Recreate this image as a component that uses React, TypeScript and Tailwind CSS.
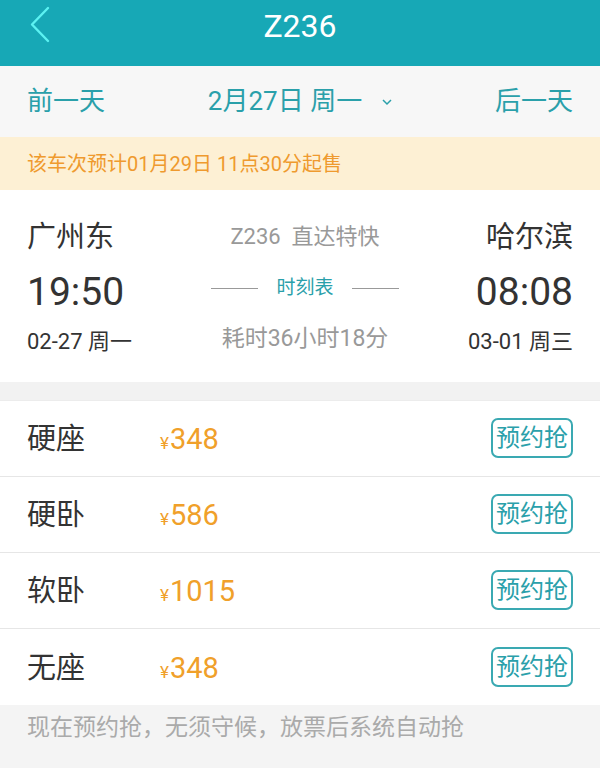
import React from "react";

const font = { fontFamily: 'Roboto, "Noto Sans CJK SC", sans-serif' };

const seats = [
  { name: "硬座", price: "348" },
  { name: "硬卧", price: "586" },
  { name: "软卧", price: "1015" },
  { name: "无座", price: "348" },
];

export default function App() {
  return (
    <div className="w-[600px] h-[768px] bg-[#f4f4f4] overflow-hidden flex flex-col" style={font}>
      {/* Header */}
      <div className="h-[66px] bg-[#17a8b6] flex items-center relative shrink-0">
        <svg className="absolute left-[28px] top-[6px]" width="24" height="38" viewBox="0 0 24 38">
          <path d="M20 2 L4 18.5 L20 35" fill="none" stroke="#5cf2f2" strokeWidth="2.4" strokeLinecap="round" strokeLinejoin="round" />
        </svg>
        <div className="flex-1 text-center text-white text-[32px] leading-none -mt-[14px]">Z236</div>
      </div>

      {/* Date bar */}
      <div className="h-[71px] bg-[#f7f7f7] flex items-center justify-between px-[27px] text-[#2aa0aa] text-[26px] shrink-0">
        <span>前一天</span>
        <span className="flex items-center">
          2月27日 周一
          <svg className="ml-[20px] mt-[2px]" width="10" height="7" viewBox="0 0 10 7">
            <path d="M1 1 L5 5 L9 1" fill="none" stroke="#2aa0aa" strokeWidth="1.5" />
          </svg>
        </span>
        <span>后一天</span>
      </div>

      {/* Notice */}
      <div className="h-[53px] bg-[#fdf0d4] flex items-center px-[27px] text-[#ef9a2e] text-[20px] shrink-0">
        该车次预计01月29日 11点30分起售
      </div>

      {/* Train info */}
      <div className="h-[192px] bg-white flex justify-between px-[27px] pt-[24px] shrink-0">
        <div className="flex flex-col text-[#333]">
          <span className="text-[29px] leading-[46px]">广州东</span>
          <span className="text-[39px] leading-[54px] mt-[5px]">19:50</span>
          <span className="text-[22px] leading-[46px]">02-27 周一</span>
        </div>
        <div className="flex flex-col items-center text-[#999] pl-[10px]">
          <span className="text-[22px] leading-[46px]">Z236&nbsp; 直达特快</span>
          <span className="flex items-center h-[50px] gap-[18px] mt-[3px]">
            <span className="w-[47px] h-px bg-[#999]" />
            <span className="text-[#2aa0aa] text-[19px]">时刻表</span>
            <span className="w-[47px] h-px bg-[#999]" />
          </span>
          <span className="text-[23px] leading-[52px]">耗时36小时18分</span>
        </div>
        <div className="flex flex-col items-end text-[#333]">
          <span className="text-[29px] leading-[46px]">哈尔滨</span>
          <span className="text-[39px] leading-[54px] mt-[5px]">08:08</span>
          <span className="text-[22px] leading-[46px]">03-01 周三</span>
        </div>
      </div>

      <div className="h-[18px] bg-[#f2f2f2] shrink-0" />

      {/* Seats */}
      <div className="bg-white flex flex-col shrink-0 border-t border-[#ececec]">
        {seats.map((s, i) => (
          <div
            key={i}
            className={`h-[76px] flex items-center px-[27px] ${i < seats.length - 1 ? "border-b border-[#e6e6e6]" : ""}`}
          >
            <span className="w-[133px] text-[29px] text-[#333] mt-[3px]">{s.name}</span>
            <span className="flex items-baseline text-[#f0a02a] mt-[3px]">
              <span className="text-[17px]">¥</span>
              <span className="text-[29px] ml-px">{s.price}</span>
            </span>
            <span className="ml-auto w-[82px] h-[40px] border-2 border-[#3aa9b2] rounded-[7px] flex items-center justify-center text-[#2aa0aa] text-[24px] -mt-[1px]">
              预约抢
            </span>
          </div>
        ))}
      </div>

      {/* Footer */}
      <div className="flex-1 bg-[#f4f4f4] px-[27px] pt-[6px] text-[#aaa] text-[23px]">
        现在预约抢，无须守候，放票后系统自动抢
      </div>
    </div>
  );
}
